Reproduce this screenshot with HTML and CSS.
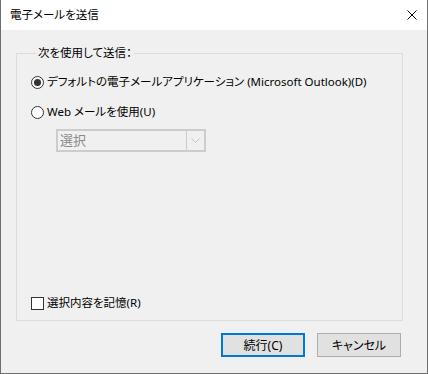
FILE: index.html
```html
<!DOCTYPE html>
<html lang="ja">
<head>
  <meta charset="UTF-8" />
  <title>電子メールを送信</title>
  <link rel="stylesheet" href="styles.css">
</head>
<body>

<div class="window">
  <div class="titlebar">
    <span class="title">電子メールを送信</span>
    <svg class="close" width="10" height="10" viewBox="0 0 10 10">
      <path d="M0.5 0.5 L9.5 9.5 M9.5 0.5 L0.5 9.5" stroke="#000" stroke-width="1" fill="none"/>
    </svg>
  </div>

  <div class="content">
    <fieldset class="group">
      <legend>次を使用して送信：</legend>

      <label class="option first">
        <span class="radio checked"></span>
        <span>デフォルトの電子メールアプリケーション (Microsoft Outlook)(D)</span>
      </label>
      <label class="option second">
        <span class="radio"></span>
        <span>Web メールを使用(U)</span>
      </label>

      <div class="combo">
        <span class="combo-text">選択</span>
        <span class="combo-arrow">
          <svg width="9" height="5" viewBox="0 0 9 5">
            <path d="M0.5 0.5 L4.5 4.5 L8.5 0.5" stroke="#c4c4c4" fill="none"/>
          </svg>
        </span>
      </div>

      <label class="option remember">
        <span class="checkbox"></span>
        <span>選択内容を記憶(R)</span>
      </label>
    </fieldset>

    <div class="buttons">
      <button class="btn default">続行(C)</button>
      <button class="btn">キャンセル</button>
    </div>
  </div>
</div>

</body>
</html>
```

FILE: styles.css
```css
body {
  margin: 0;
  font-family: "Noto Sans", "Noto Sans CJK JP", sans-serif;
  font-size: 11.5px;
  font-feature-settings: "palt";
  color: #000;
  background: #fff;
}

.window {
  width: 428px;
  height: 374px;
  box-sizing: border-box;
  border: 1px solid #6d6d6d;
  border-top: none;
  display: flex;
  flex-direction: column;
}

.titlebar {
  height: 30px;
  flex-shrink: 0;
  background: #fff;
  display: flex;
  align-items: center;
  justify-content: space-between;
  padding: 0 10px 0 9px;
}

.title {
  line-height: 16px;
}

.close {
  display: block;
}

.content {
  flex: 1;
  background: #f0f0f0;
  padding: 15px 0 0 15px;
  display: flex;
  flex-direction: column;
}

.group {
  margin: 0;
  width: 387px;
  height: 276px;
  box-sizing: border-box;
  border: 1px solid #dcdcdc;
  padding: 0 0 9px 14px;
}

.group legend {
  margin-left: 5px;
  padding: 0 2px;
  line-height: 16px;
}

.option {
  display: flex;
  align-items: center;
  gap: 3px;
  line-height: 16px;
}

.option.first {
  margin-top: 13px;
}

.option.second {
  margin-top: 14px;
}

.option.remember {
  margin-top: 143px;
}

.radio {
  width: 13px;
  height: 13px;
  box-sizing: border-box;
  border: 1px solid #333;
  border-radius: 50%;
  background: #fff;
  display: flex;
  align-items: center;
  justify-content: center;
}

.radio.checked::after {
  content: "";
  width: 7px;
  height: 7px;
  border-radius: 50%;
  background: #333;
}

.checkbox {
  width: 13px;
  height: 13px;
  box-sizing: border-box;
  border: 1px solid #333;
  background: #fff;
}

.combo {
  margin: 9px 0 0 25px;
  width: 150px;
  height: 23px;
  box-sizing: border-box;
  background: #cccccc;
  padding: 2px;
  display: flex;
  gap: 1px;
}

.combo-text {
  flex: 1;
  background: #f0f0f0;
  color: #8a8a8a;
  font-size: 13px;
  line-height: 19px;
  padding-left: 2px;
}

.combo-arrow {
  width: 17px;
  background: #f0f0f0;
  display: flex;
  align-items: center;
  justify-content: center;
}

.buttons {
  display: flex;
  justify-content: flex-end;
  gap: 12px;
  margin: 12px 26px 0 0;
}

.btn {
  width: 84px;
  height: 24px;
  box-sizing: border-box;
  font: inherit;
  font-size: 12px;
  color: #000;
  background: #e1e1e1;
  border: 1px solid #adadad;
  padding: 0;
}

.btn.default {
  border: 2px solid #0078d7;
}
```
